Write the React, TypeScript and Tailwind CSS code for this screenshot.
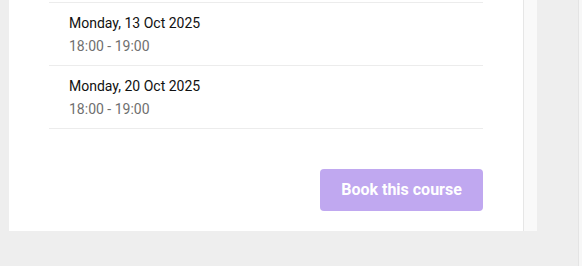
const sessions = [
  { date: 'Monday, 13 Oct 2025', time: '18:00 - 19:00' },
  { date: 'Monday, 20 Oct 2025', time: '18:00 - 19:00' },
];

export default function App() {
  return (
    <div className="flex h-[266px] w-[582px] overflow-hidden bg-[#eeeeee] font-['Roboto',sans-serif]">
      <div className="ml-[9px] flex h-[231px]">
        <div className="flex w-[515px] flex-col border-r border-[#e6e6e6] bg-white pl-[40px] pr-[40px]">
          <div className="h-[2px]" />
          <div className="border-t border-[#ececec]">
            {sessions.map((s) => (
              <div key={s.date} className="flex flex-col gap-[3px] border-b border-[#ececec] px-5 pt-[10px] pb-[9px]">
                <div className="text-[14px] leading-5 text-[#111111]">{s.date}</div>
                <div className="text-[14px] leading-5 text-[#6f6f6f]">{s.time}</div>
              </div>
            ))}
          </div>
          <div className="mt-[40px] flex justify-end">
            <button className="h-[42px] w-[163px] rounded-[4px] bg-[#c0a8f0] text-[16px] font-bold text-white">
              Book this course
            </button>
          </div>
        </div>
        <div className="w-[13px] bg-[#f9f9f9]" />
      </div>
      <div className="ml-auto flex h-full">
        <div className="w-px bg-[#e4e4e4]" />
        <div className="w-[3px] bg-[#f7f7f7]" />
      </div>
    </div>
  );
}
